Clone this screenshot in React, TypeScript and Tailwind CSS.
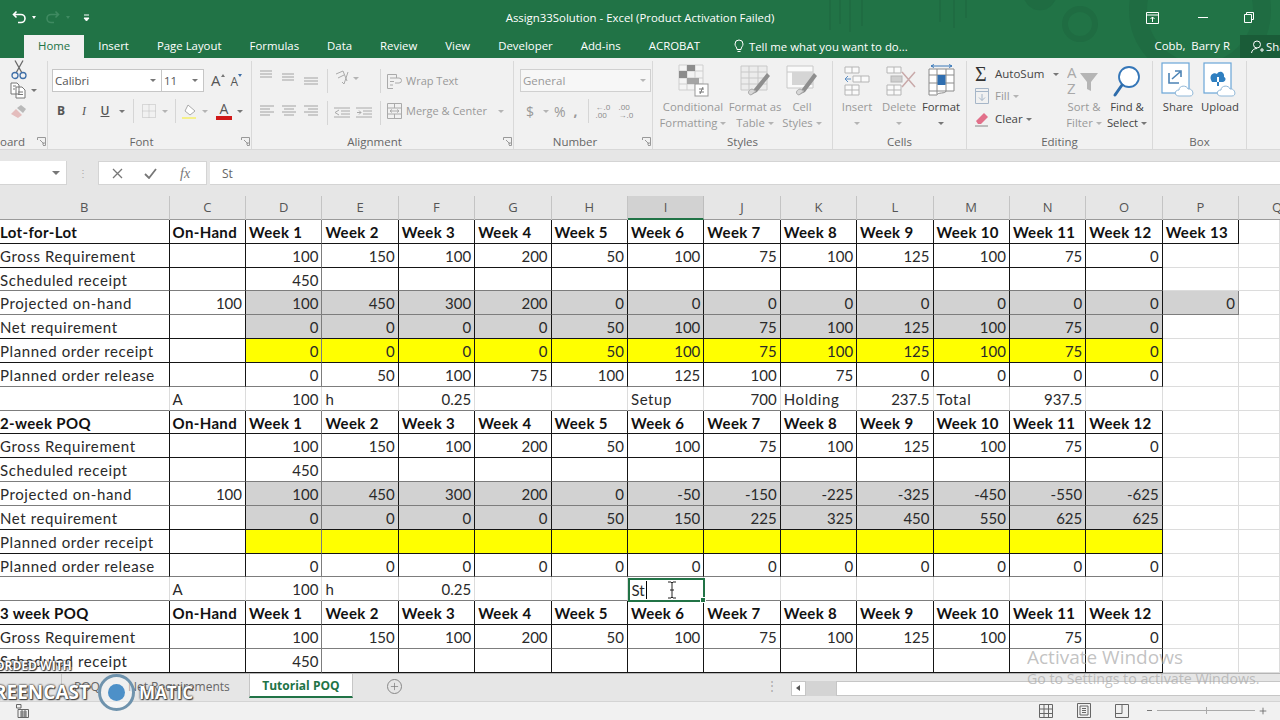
import { Plus } from "lucide-react"

const weeks = (n: number) => Array.from({ length: n }, (_, i) => `Week ${i + 1}`)
const zeros = Array(12).fill(0)
const gross = [100, 150, 100, 200, 50, 100, 75, 100, 125, 100, 75, 0]

type Row = {
  b?: string
  c?: string | number
  vals?: (string | number)[]
  kind: "head" | "data" | "note"
  fill?: "gray" | "yellow"
  soft?: boolean
}

const rows: Row[] = [
  { kind: "head", b: "Lot-for-Lot", c: "On-Hand", vals: weeks(13) },
  { kind: "data", b: "Gross Requirement", vals: gross },
  { kind: "data", b: "Scheduled receipt", vals: [450], soft: true },
  { kind: "data", b: "Projected on-hand", c: 100, fill: "gray", vals: [100, 450, 300, 200, 0, 0, 0, 0, 0, 0, 0, 0, 0], soft: true },
  { kind: "data", b: "Net requirement", fill: "gray", vals: [0, 0, 0, 0, 50, 100, 75, 100, 125, 100, 75, 0] },
  { kind: "data", b: "Planned order receipt", fill: "yellow", vals: [0, 0, 0, 0, 50, 100, 75, 100, 125, 100, 75, 0] },
  { kind: "data", b: "Planned order release", vals: [0, 50, 100, 75, 100, 125, 100, 75, 0, 0, 0, 0], soft: true },
  { kind: "note", c: "A", vals: [100, "h", 0.25, "", "", "Setup", 700, "Holding", 237.5, "Total", 937.5, ""], soft: true },
  { kind: "head", b: "2-week POQ", c: "On-Hand", vals: weeks(12) },
  { kind: "data", b: "Gross Requirement", vals: gross },
  { kind: "data", b: "Scheduled receipt", vals: [450], soft: true },
  { kind: "data", b: "Projected on-hand", c: 100, fill: "gray", vals: [100, 450, 300, 200, 0, -50, -150, -225, -325, -450, -550, -625], soft: true },
  { kind: "data", b: "Net requirement", fill: "gray", vals: [0, 0, 0, 0, 50, 150, 225, 325, 450, 550, 625, 625] },
  { kind: "data", b: "Planned order receipt", fill: "yellow", vals: [] },
  { kind: "data", b: "Planned order release", vals: zeros, soft: true },
  { kind: "note", c: "A", vals: [100, "h", 0.25, "", "", "", "", "", "", "", "", ""], soft: true },
  { kind: "head", b: "3 week POQ", c: "On-Hand", vals: weeks(12) },
  { kind: "data", b: "Gross Requirement", vals: gross, soft: true },
  { kind: "data", b: "Scheduled receipt", vals: [450] },
]

const columns = ["B", "C", "D", "E", "F", "G", "H", "I", "J", "K", "L", "M", "N", "O", "P", "Q"]

function Tiny({ className = "" }: { className?: string }) {
  return <span className={`inline-block w-0 h-0 border-x-[3px] border-x-transparent border-t-[3px] border-t-[#777] ${className}`} />
}

function Launcher() {
  return (
    <svg width="9" height="9" viewBox="0 0 9 9" className="absolute right-[1px] bottom-[3px]">
      <path d="M0.5 3V0.5H8.5V8.5H6M3 3L7 7M5 7H7V5" fill="none" stroke="#999" strokeWidth="1" />
    </svg>
  )
}

function Group({ label, width, launcher, left, children }: { label: string; width: number; launcher?: boolean; left?: boolean; children?: React.ReactNode }) {
  const place = left ? "text-left" : launcher ? "text-center pr-[16px]" : "text-center"
  return (
    <div style={{ width }} className="relative shrink-0 h-full flex flex-col border-r border-[#d9d9d9]">
      <div className="flex-1 min-h-0 relative">{children}</div>
      <div className={`h-[14px] text-[11.5px] leading-[14px] text-[#666] ${place}`}>{label}</div>
      {launcher && <Launcher />}
    </div>
  )
}

function AlignLines({ kind }: { kind: "l" | "c" | "r" | "t" | "m" | "b" }) {
  const paths = {
    l: "M1 3H15M1 6H11M1 9H15M1 12H11",
    c: "M1 3H15M3 6H13M1 9H15M3 12H13",
    r: "M1 3H15M5 6H15M1 9H15M5 12H15",
    t: "M1 2H13M1 5H13M1 8H13",
    m: "M1 5H13M1 8H13M1 11H13",
    b: "M1 9H15M1 12H15M1 15H15",
  }
  return (
    <svg width="16" height="16" viewBox="0 0 16 16">
      <path d={paths[kind]} stroke="#a3a3a3" strokeWidth="1" fill="none" />
    </svg>
  )
}

function Sep({ h = 24 }: { h?: number }) {
  return <div style={{ height: h }} className="w-px bg-[#d6d6d6] shrink-0" />
}

function BigTool({ width, label, sub, dim = true, noArrow, children }: { width: number; label: string; sub?: string; dim?: boolean; noArrow?: boolean; children: React.ReactNode }) {
  return (
    <div style={{ width }} className={`flex flex-col items-center text-[11.3px] leading-[16px] shrink-0 ${dim ? "text-[#999]" : "text-[#444]"}`}>
      <div className="h-[38px] flex items-center justify-center pt-[2px]">{children}</div>
      <div className="whitespace-nowrap">{label}</div>
      <div className="whitespace-nowrap flex items-center gap-[3px] h-[16px]">
        {sub}
        {!noArrow && <Tiny className={dim ? "opacity-50" : ""} />}
      </div>
    </div>
  )
}

function GridIcon({ children }: { children?: React.ReactNode }) {
  return (
    <svg width="36" height="34" viewBox="0 0 36 34">
      {children}
    </svg>
  )
}

function Cell({ row, index, value, fill, blackRight, softRight, blackBottom, softBottom }: {
  row: Row
  index: number
  value?: string | number
  fill?: "gray" | "yellow"
  blackRight: boolean
  softRight: boolean
  blackBottom: boolean
  softBottom: boolean
}) {
  const isNumber = typeof value === "number"
  const right = blackRight ? (softRight ? "border-r-[#7d7d7d]" : "border-r-[#151515]") : "border-r-[#dcdcdc]"
  const bottom = blackBottom ? (softBottom ? "border-b-[#7d7d7d]" : "border-b-[#151515]") : "border-b-[#dcdcdc]"
  const bg = fill === "gray" ? "bg-[#d2d2d2]" : fill === "yellow" ? "bg-[#ffff00]" : "bg-white"
  const weight = row.kind === "head" ? "font-bold text-[#111] tracking-[0.35px]" : isNumber ? "text-[#2a2a2a]" : "text-[#2a2a2a] tracking-[0.6px]"
  const align = isNumber ? "text-right pr-[3px]" : index === 0 ? "pl-0" : "pl-[3px]"
  return (
    <div className={`h-[23.83px] border-r border-b overflow-visible whitespace-nowrap text-[15px] leading-[24px] ${right} ${bottom} ${bg} ${weight} ${align}`}>
      {value}
    </div>
  )
}

function SheetRow({ row }: { row: Row }) {
  const all: (string | number | undefined)[] = [row.b, row.c, ...(row.vals ?? [])]
  return (
    <>
      {columns.map((col, i) => {
        const withinTable = i <= 13
        const extra = i === 14 && row.vals !== undefined && row.vals.length === 13
        const boxed = withinTable || extra
        const fill = (i >= 2 && i <= 13) || extra ? row.fill : undefined
        return (
          <Cell
            key={col}
            row={row}
            index={i}
            value={all[i]}
            fill={fill}
            blackRight={row.kind === "note" ? false : boxed}
            softRight={i === 2 || (extra && row.fill === "gray")}
            blackBottom={boxed}
            softBottom={!!row.soft}
          />
        )
      })}
    </>
  )
}

function BoxIcon({ kind }: { kind: "share" | "upload" }) {
  return (
    <svg width="36" height="38" viewBox="0 0 36 38">
      <rect x="2" y="1" width="27" height="30" fill="#fff" stroke="#6aa6d8" strokeWidth="1.2" />
      {kind === "share" ? (
        <path d="M9 11V21H19M12 17L20 10M15 9H21V15" fill="none" stroke="#4c83b5" strokeWidth="1.6" />
      ) : (
        <path d="M9 18C7 13 12 10 15 12C17 8 23 10 22 15C25 16 23 20 21 20H10ZM15 15V24H17V15" fill="#2f7fc0" />
      )}
      <path d="M19 34C14 34 14 28 19 28C19 23 27 23 28 27C33 26 35 34 30 34Z" fill="#fff" stroke="#8fb7d8" />
    </svg>
  )
}

export default function App() {
  const tabs = ["Insert", "Page Layout", "Formulas", "Data", "Review", "View", "Developer", "Add-ins", "ACROBAT"]

  return (
    <div className="w-[1280px] h-[720px] overflow-hidden relative flex flex-col bg-[#e6e6e6] font-['Open_Sans',sans-serif]">
      {/* title + tabs */}
      <div className="h-[58px] shrink-0 bg-[#217346] relative text-white">
        <svg width="460" height="58" viewBox="0 0 460 58" className="absolute right-0 top-0">
          <g fill="none" stroke="#1f6c42">
            <path d="M10 0V30M20 0V24M30 0V32M42 0V26M120 0V22M134 0V28M146 0V18" strokeWidth="2" />
            <circle cx="220" cy="-6" r="16" fill="#1f6c42" />
            <circle cx="260" cy="24" r="15" strokeWidth="6" />
            <circle cx="380" cy="10" r="62" strokeWidth="18" />
          </g>
        </svg>
        <div className="relative h-[35px] grid grid-cols-[1fr_auto_1fr] items-center">
          <div className="flex items-center pl-[12px]">
            <svg width="15" height="15" viewBox="0 0 15 15">
              <path d="M4.5 1.5L1.5 4.5L4.5 7.5M1.5 4.5H9a4 4 0 0 1 0 8H6" fill="none" stroke="#fff" strokeWidth="1.6" />
            </svg>
            <span className="ml-[5px] w-0 h-0 border-x-[2.5px] border-x-transparent border-t-[3px] border-t-white" />
            <svg width="15" height="15" viewBox="0 0 15 15" className="ml-[9px]">
              <path d="M10.5 1.5L13.5 4.5L10.5 7.5M13.5 4.5H6a4 4 0 0 0 0 8H9" fill="none" stroke="#3f8a61" strokeWidth="1.6" />
            </svg>
            <span className="ml-[6px] w-0 h-0 border-x-[2.5px] border-x-transparent border-t-[3px] border-t-[#3f8a61]" />
            <svg width="7" height="8" viewBox="0 0 7 8" className="ml-[13px]">
              <path d="M1 1H6M1 4L3.5 7L6 4Z" stroke="#fff" fill="#fff" strokeWidth="1" />
            </svg>
          </div>
          <div className="text-[11.4px] whitespace-nowrap">Assign33Solution - Excel (Product Activation Failed)</div>
          <div className="flex justify-end items-center text-white">
            <svg width="13" height="12" viewBox="0 0 13 12" className="mr-[39px]">
              <path d="M0.5 0.5H12.5V11.5H0.5ZM0.5 3H12.5M6.5 10V5M4.5 7L6.5 5L8.5 7" fill="none" stroke="#fff" />
            </svg>
            <div className="w-[10px] h-px bg-white mr-[36px]" />
            <svg width="10" height="11" viewBox="0 0 10 11" className="mr-[26px]">
              <path d="M2.5 2.5V0.5H9.5V7.5H7.5M0.5 2.5H7.5V10.5H0.5Z" fill="none" stroke="#fff" />
            </svg>
          </div>
        </div>
        <div className="relative h-[23px] flex items-stretch text-[11.4px] leading-[22px] pl-[24px]">
          <div className="px-[14px] bg-[#f1f1f1] text-[#217346]">Home</div>
          {tabs.map((t) => (
            <div key={t} className="px-[14px] whitespace-nowrap">{t}</div>
          ))}
          <div className="ml-[20px] flex items-center gap-[5px] whitespace-nowrap">
            <svg width="10" height="15" viewBox="0 0 10 15">
              <path d="M3 10.5C3 8 1 7.5 1 5a4 4 0 0 1 8 0C9 7.5 7 8 7 10.5ZM3.5 12.5H6.5" fill="none" stroke="#fff" />
            </svg>
            Tell me what you want to do...
          </div>
          <div className="ml-auto whitespace-nowrap mr-[10px]">Cobb,&nbsp; Barry R</div>
          <div className="w-[40px] bg-[#1a5c38] flex items-center pl-[11px] gap-[2px] overflow-hidden">
            <svg width="13" height="14" viewBox="0 0 13 14" className="shrink-0">
              <circle cx="6" cy="4.5" r="3.5" fill="none" stroke="#fff" />
              <path d="M0.5 13C1 10 3 8.5 6 8.5M9 10H13M11 8V12" fill="none" stroke="#fff" />
            </svg>
            <span>Share</span>
          </div>
        </div>
      </div>

      {/* ribbon */}
      <div className="h-[92px] shrink-0 bg-[#f1f1f1] border-b border-[#d8d8d8] flex pt-[3px] text-[#555]">
        <Group label="oard" width={48} launcher left>
          <div className="flex flex-col items-start pl-[10px] -mt-[1px]">
            <svg width="18" height="20" viewBox="0 0 18 20">
              <path d="M5 0.5L12 13M13 0.5L6 13" fill="none" stroke="#6a6a6a" strokeWidth="1.3" />
              <circle cx="5" cy="15.5" r="3" fill="none" stroke="#3f6fa8" strokeWidth="1.3" />
              <circle cx="13" cy="15.5" r="3" fill="none" stroke="#3f6fa8" strokeWidth="1.3" />
            </svg>
            <div className="flex items-center mt-[2px]">
              <svg width="16" height="17" viewBox="0 0 16 17">
                <path d="M1 1H7L9 3V12H1ZM6 5H12L15 8V16H6ZM3 4H6M3 7H5M8 10H13M8 12.5H13" fill="#fff" stroke="#777" />
              </svg>
              <Tiny className="ml-[5px]" />
            </div>
            <svg width="17" height="15" viewBox="0 0 17 15" className="mt-[5px]">
              <path d="M1 10L6 5L12 11L8 14Z" fill="#e4bdbd" />
              <path d="M7 4L11 1L16 5L13 9Z" fill="#b9b9b9" />
            </svg>
          </div>
        </Group>

        <Group label="Font" width={204} launcher>
          <div className="pl-[4px] pt-[8px]">
            <div className="flex items-center">
              <div className="w-[110px] h-[23px] bg-white border border-[#c6c6c6] flex items-center justify-between pl-[2px] pr-[5px] text-[11.5px]">
                Calibri <Tiny />
              </div>
              <div className="w-[42px] h-[23px] bg-white border border-l-0 border-[#c6c6c6] flex items-center justify-between pl-[2px] pr-[5px] text-[11.5px]">
                11 <Tiny />
              </div>
              <span className="ml-[7px] text-[15px] leading-none text-[#555]">A</span>
              <span className="mb-[10px] w-0 h-0 border-x-[2px] border-x-transparent border-b-[3px] border-b-[#777]" />
              <span className="ml-[6px] text-[12px] leading-none mt-[2px] text-[#555]">A</span>
              <span className="mb-[10px] w-0 h-0 border-x-[2.5px] border-x-transparent border-t-[3px] border-t-[#3f6fa8]" />
            </div>
            <div className="flex items-center h-[24px] mt-[7px] text-[#555]">
              <span className="w-[18px] text-center text-[12px] font-bold">B</span>
              <span className="ml-[3px] w-[22px] text-center text-[12px] italic font-['Liberation_Serif',serif]">I</span>
              <span className="w-[20px] text-center text-[12px] underline font-semibold">U</span>
              <Tiny className="ml-[4px]" />
              <div className="ml-[8px]"><Sep /></div>
              <svg width="16" height="16" viewBox="0 0 16 16" className="ml-[7px]">
                <path d="M1.5 1.5H14.5V14.5H1.5ZM8 1.5V14.5M1.5 8H14.5" fill="none" stroke="#bdbdbd" strokeDasharray="1 1" />
              </svg>
              <Tiny className="ml-[5px] opacity-50" />
              <div className="ml-[7px]"><Sep /></div>
              <svg width="17" height="17" viewBox="0 0 17 17" className="ml-[6px]">
                <path d="M6 2L13 8L8 12L3 8Z" fill="#fff" stroke="#aaa" />
                <rect x="0" y="14" width="14" height="2" fill="#f5f08a" />
              </svg>
              <Tiny className="ml-[3px] opacity-50" />
              <div className="ml-[8px] flex flex-col items-center w-[16px] leading-none">
                <span className="text-[14px] leading-[14px] text-[#555]">A</span>
                <span className="w-[16px] h-[4px] bg-[#d01818]" />
              </div>
              <Tiny className="ml-[5px]" />
            </div>
          </div>
        </Group>

        <Group label="Alignment" width={262} launcher>
          <div className="flex pl-[7px] pt-[8px] h-full">
            <div className="grid grid-cols-[22px_22px_22px] h-[60px] content-start gap-y-[10px]">
              <AlignLines kind="t" />
              <AlignLines kind="m" />
              <AlignLines kind="b" />
              <div className="mt-[8px]"><AlignLines kind="l" /></div>
              <div className="mt-[8px]"><AlignLines kind="c" /></div>
              <div className="mt-[8px]"><AlignLines kind="r" /></div>
            </div>
            <div className="flex flex-col gap-[8px] ml-[2px]">
              <Sep />
              <Sep />
            </div>
            <div className="w-[46px] pl-[6px] flex flex-col gap-[16px]">
              <div className="flex items-center h-[16px] mt-[1px]">
                <svg width="16" height="16" viewBox="0 0 16 16">
                  <path d="M2 4L9 1L13 11M4 8L10 5M14 2L10 14L8 12" fill="none" stroke="#aaa" />
                </svg>
                <Tiny className="ml-[3px] opacity-50" />
              </div>
              <div className="flex items-center h-[16px] mt-[3px]">
                <svg width="16" height="14" viewBox="0 0 16 14">
                  <path d="M0 2H16M7 5H16M7 8H16M0 11H16M5 4L1 6.5L5 9" stroke="#aaa" fill="none" />
                </svg>
                <svg width="16" height="14" viewBox="0 0 16 14" className="ml-[6px]">
                  <path d="M0 2H16M7 5H16M7 8H16M0 11H16M1 6.5H5M3 4.5L5 6.5L3 8.5" stroke="#aaa" fill="none" />
                </svg>
              </div>
            </div>
            <div className="flex flex-col gap-[8px] ml-[6px]">
              <Sep />
              <Sep />
            </div>
            <div className="pl-[6px] text-[11px] leading-[16px] text-[#999] whitespace-nowrap">
              <div className="flex items-center gap-[4px] h-[16px] mt-[4px]">
                <svg width="15" height="15" viewBox="0 0 15 15">
                  <path d="M0.5 0.5H9.5V4M0.5 0.5V14.5H6M3 4H12A2.5 2.5 0 0 1 12 9H8M3 7.5H7M3 11H6" fill="none" stroke="#aaa" />
                </svg>
                Wrap Text
              </div>
              <div className="flex items-center gap-[4px] h-[16px] mt-[14px]">
                <svg width="15" height="16" viewBox="0 0 15 16">
                  <path d="M0.5 0.5H14.5V15.5H0.5ZM0.5 5H14.5M0.5 11H14.5M7.5 0.5V5M7.5 11V15.5M3 8H12M5 6.5L3 8L5 9.5M10 6.5L12 8L10 9.5" fill="none" stroke="#aaa" />
                </svg>
                Merge &amp; Center
                <Tiny className="ml-[7px] opacity-50" />
              </div>
            </div>
          </div>
        </Group>

        <Group label="Number" width={139} launcher>
          <div className="pl-[6px] pt-[8px]">
            <div className="w-[131px] h-[23px] bg-[#f7f7f7] border border-[#d0d0d0] flex items-center justify-between pl-[2px] pr-[4px] text-[11.5px] text-[#999]">
              General <Tiny className="opacity-50" />
            </div>
            <div className="flex items-center h-[24px] mt-[7px] text-[#999]">
              <span className="ml-[1px] w-[18px] text-center text-[14px]">$</span>
              <Tiny className="ml-[4px] opacity-50" />
              <span className="ml-[5px] text-[14px]">%</span>
              <span className="ml-[8px] text-[14px] font-bold leading-none">,</span>
              <div className="ml-[10px]"><Sep /></div>
              <div className="ml-[7px] text-[8px] leading-[8px] w-[21px] text-[#8a8a8a] whitespace-nowrap">
                &larr;.0<br />.00
              </div>
              <div className="ml-[2px] text-[8px] leading-[8px] w-[18px] text-[#8a8a8a] whitespace-nowrap">
                .00<br />&rarr;.0
              </div>
            </div>
          </div>
        </Group>

        <Group label="Styles" width={180}>
          <div className="flex pl-[6px]">
            <BigTool width={68} label="Conditional" sub="Formatting">
              <GridIcon>
                <path d="M4 1H28V26H4ZM4 7H28M4 14H28M4 20H28M12 1V26M20 1V26" fill="#f4f4f4" stroke="#cfcfcf" />
                <path d="M12 1H20V7H12ZM4 7H12V14H4Z" fill="#8c8c8c" />
                <path d="M12 14H24V20H12Z" fill="#a5a5a5" />
                <rect x="20" y="20" width="13" height="12" fill="#fff" stroke="#999" />
                <path d="M24 25H29M24 28H29M28 23L25 30" stroke="#777" fill="none" />
              </GridIcon>
            </BigTool>
            <BigTool width={56} label="Format as" sub="Table">
              <GridIcon>
                <path d="M4 2H30V26H4ZM4 8H30M4 14H30M4 20H30M12 2V26M21 2V26" fill="#ececec" stroke="#c8c8c8" />
                <path d="M33 12L20 28L14 31L17 25L30 9Z" fill="#8e8e8e" />
                <path d="M14 31C10 30 11 26 15 25L19 27Z" fill="#d7d7d7" stroke="#aaa" />
              </GridIcon>
            </BigTool>
            <BigTool width={38} label="Cell" sub="Styles">
              <GridIcon>
                <path d="M3 2H29V24H3ZM3 8H29" fill="#fafafa" stroke="#c8c8c8" />
                <rect x="8" y="8" width="21" height="13" fill="#d5d5d5" />
                <path d="M33 12L21 28L15 31L18 25L30 9Z" fill="#8e8e8e" />
                <path d="M15 31C11 30 12 26 16 25L20 27Z" fill="#d7d7d7" stroke="#aaa" />
              </GridIcon>
            </BigTool>
          </div>
        </Group>

        <Group label="Cells" width={134}>
          <div className="flex pl-[3px]">
            <BigTool width={42} label="Insert">
              <GridIcon>
                <path d="M6 3H20V9H6ZM6 21H20V31H6ZM13 3V9M13 21V31M6 26H20M14 12H30V18H14ZM22 12V18" fill="#fafafa" stroke="#b5b5b5" />
                <path d="M6 15H12M9 12L6 15L9 18" stroke="#5c8ec4" fill="none" />
              </GridIcon>
            </BigTool>
            <BigTool width={42} label="Delete">
              <GridIcon>
                <path d="M6 3H20V9H6ZM6 21H20V31H6ZM13 3V9M13 21V31M6 26H20" fill="#fafafa" stroke="#b5b5b5" />
                <rect x="10" y="12" width="11" height="6" fill="#cfcfcf" stroke="#b5b5b5" />
                <path d="M21 8L34 23M34 8L21 23" stroke="#c9a9a9" strokeWidth="1.5" />
              </GridIcon>
            </BigTool>
            <BigTool width={42} label="Format" dim={false}>
              <GridIcon>
                <path d="M6 5H31V27H6ZM6 11H31M6 19H31M14 5V30M23 5V27M6 27V31H14C14 28 23 30 23 27" fill="#fff" stroke="#8b8b8b" />
                <rect x="14.5" y="11" width="8" height="10" fill="#2f6eb0" />
                <path d="M8 2H29M8 2L11 0.5M8 2L11 3.5M29 2L26 0.5M29 2L26 3.5" stroke="#3a78b8" fill="none" />
              </GridIcon>
            </BigTool>
          </div>
        </Group>

        <Group label="Editing" width={186}>
          <div className="flex text-[11.5px] leading-[16px]">
            <div className="w-[96px] pl-[8px] pt-[5px] shrink-0">
              <div className="flex items-center h-[16px]">
                <span className="w-[16px] text-[20px] leading-[16px] text-[#333] font-['Liberation_Serif',serif]">&Sigma;</span>
                <span className="ml-[4px] text-[#444]">AutoSum</span>
                <Tiny className="ml-[9px]" />
              </div>
              <div className="flex items-center h-[16px] mt-[6px] text-[#999]">
                <svg width="14" height="16" viewBox="0 0 14 16">
                  <path d="M0.5 0.5H13.5V15.5H0.5ZM0.5 3.5H13.5M7 6V12.5M4 9.5L7 12.5L10 9.5" fill="none" stroke="#a6b6c8" />
                </svg>
                <span className="ml-[6px]">Fill</span>
                <Tiny className="ml-[3px] opacity-50" />
              </div>
              <div className="flex items-center h-[16px] mt-[7px] text-[#444]">
                <svg width="14" height="16" viewBox="0 0 14 16">
                  <path d="M1 10L9 2L13 6L6 13H3Z" fill="#e2708a" />
                  <path d="M0 15H13" stroke="#888" />
                </svg>
                <span className="ml-[6px]">Clear</span>
                <Tiny className="ml-[3px]" />
              </div>
            </div>
            <BigTool width={42} label="Sort &" sub="Filter">
              <svg width="34" height="34" viewBox="0 0 34 34">
                <text x="0" y="14" fontSize="15" fill="#a9a9a9">A</text>
                <text x="0" y="30" fontSize="15" fill="#a9a9a9">Z</text>
                <path d="M13 9H31L24 18V27L20 25V18Z" fill="#b5b5b5" />
              </svg>
            </BigTool>
            <BigTool width={44} label="Find &" sub="Select" dim={false}>
              <svg width="30" height="34" viewBox="0 0 30 34">
                <circle cx="17" cy="13" r="10" fill="#fff" stroke="#3476b8" strokeWidth="1.8" />
                <path d="M10 21L3 31" stroke="#2d6cab" strokeWidth="3" strokeLinecap="round" />
              </svg>
            </BigTool>
          </div>
        </Group>

        <Group label="Box" width={94}>
          <div className="flex pl-[4px]">
            <BigTool width={42} label="Share" dim={false} noArrow>
              <BoxIcon kind="share" />
            </BigTool>
            <BigTool width={42} label="Upload" dim={false} noArrow>
              <BoxIcon kind="upload" />
            </BigTool>
          </div>
        </Group>
      </div>

      {/* formula bar */}
      <div className="h-[46px] shrink-0 flex items-center text-[#666] bg-[#e6e6e6]">
        <div className="w-[67px] h-[24px] bg-white border-r border-b border-[#d4d4d4] flex items-center justify-end pr-[6px]">
          <Tiny className="border-x-[4px] border-t-[4px]" />
        </div>
        <div className="w-[31px] flex justify-center text-[#aaa] text-[10px] leading-[5px] tracking-tight">⋮</div>
        <div className="w-[109px] h-[24px] bg-white border border-[#d4d4d4] flex items-center text-[#777]">
          <span className="ml-[13px] flex">
            <svg width="11" height="11" viewBox="0 0 11 11"><path d="M1 1L10 10M10 1L1 10" stroke="#777" strokeWidth="1.3" /></svg>
          </span>
          <span className="ml-[21px] flex">
            <svg width="13" height="11" viewBox="0 0 13 11"><path d="M1 6L5 10L12 1" fill="none" stroke="#777" strokeWidth="1.8" /></svg>
          </span>
          <span className="ml-[23px] italic font-['Liberation_Serif',serif] text-[14px]">fx</span>
        </div>
        <div className="ml-[3px] flex-1 h-[24px] bg-white border-y border-[#d4d4d4] pl-[12px] text-[12px] leading-[23px]">St</div>
      </div>

      {/* column letters */}
      <div className="h-[24px] shrink-0 grid grid-cols-[169.6px_repeat(14,76.4px)_1fr] bg-[#e6e6e6] border-b border-[#9a9a9a] text-[13px] text-[#555] leading-[23px] text-center">
        {columns.map((c) => (
          <div key={c} className={c === "I" ? "bg-[#d2d2d2] border-r border-[#bdbdbd] border-b-2 border-b-[#217346] h-[24px]" : c === "Q" ? "text-left pl-[33px]" : "border-r border-[#c4c4c4]"}>
            {c}
          </div>
        ))}
      </div>

      {/* sheet */}
      <div className="relative grid grid-cols-[169.6px_repeat(14,76.4px)_1fr] bg-white font-['Lato',sans-serif]">
        {rows.map((row, i) => (
          <SheetRow key={i} row={row} />
        ))}
        {/* active cell I, editing */}
        <div className="absolute left-[627.5px] top-[357.5px] w-[77px] h-[24px] border-2 border-[#217346] bg-white text-[15px] leading-[21px] pl-[2px] text-[#2a2a2a]">
          <span className="border-r border-black pr-px">St</span>
          <span className="absolute right-[-3px] bottom-[-3px] w-[6px] h-[6px] bg-[#217346] border border-white" />
        </div>
      </div>

      {/* sheet tabs */}
      <div className="h-[28px] shrink-0 bg-[#e6e6e6] border-t border-[#b5b5b5] flex items-start text-[12px] text-[#666]">
        <div className="w-[62px] h-[24px] border-r border-[#c6c6c6]" />
        <div className="ml-[12px] leading-[26px]">POQ</div>
        <div className="pl-[28px] w-[149px] leading-[26px] whitespace-nowrap">Net Requirements</div>
        <div className="w-[104px] h-[24px] bg-white border-x border-[#c6c6c6] border-b-2 border-b-[#217346] text-center leading-[24px] font-bold text-[#217346]">
          Tutorial POQ
        </div>
        <div className="ml-[34px] mt-[5px] w-[15px] h-[15px] rounded-full border border-[#888] flex items-center justify-center">
          <Plus size={11} strokeWidth={1.5} color="#777" />
        </div>
        <div className="ml-[364px] mt-[6px] text-[#aaa] leading-[12px]">⋮</div>
        <div className="ml-[13px] mt-[7px] w-[15px] h-[15px] bg-white border border-[#c6c6c6] flex items-center justify-center">
          <span className="w-0 h-0 border-y-[3.5px] border-y-transparent border-r-[4px] border-r-[#555]" />
        </div>
        <div className="mt-[7px] w-[30px] h-[15px] bg-[#d4d4d4]" />
        <div className="mt-[7px] flex-1 h-[15px] bg-white border border-[#c6c6c6] border-r-0" />
      </div>

      {/* status bar */}
      <div className="flex-1 bg-[#f1f1f1] border-t border-[#d4d4d4] flex items-center pl-[16px]">
        <svg width="13" height="14" viewBox="0 0 13 14">
          <path d="M0.5 0.5H5V4H0.5ZM2 5.5H12.5V13.5H2ZM4 8H11M4 10H11M4 12H11M6 6V13M9 6V13" fill="none" stroke="#666" />
        </svg>
        <div className="ml-auto flex items-center mr-[12px]">
          <svg width="14" height="14" viewBox="0 0 14 14">
            <path d="M0.5 0.5H13.5V13.5H0.5ZM0.5 5H13.5M0.5 9.5H13.5M5 0.5V13.5M9.5 0.5V13.5" fill="none" stroke="#666" />
          </svg>
          <svg width="14" height="15" viewBox="0 0 14 15" className="ml-[24px]">
            <path d="M0.5 0.5H13.5V14.5H0.5ZM3 3H11V12H3ZM5 5.5H9M5 7.5H9M5 9.5H9" fill="none" stroke="#666" />
          </svg>
          <svg width="14" height="14" viewBox="0 0 14 14" className="ml-[24px]">
            <path d="M0.5 0.5H13.5V13.5H0.5ZM0.5 9.5H7V0.5" fill="none" stroke="#666" />
          </svg>
          <span className="ml-[18px] w-[5px] h-px bg-[#777]" />
          <div className="relative ml-[5px] w-[98px] h-px bg-[#aaa]">
            <span className="absolute left-[49px] -top-[3px] w-px h-[7px] bg-[#aaa]" />
          </div>
          <Plus size={10} color="#666" className="ml-[3px]" />
        </div>
      </div>

      {/* screen recorder watermark */}
      <div className="absolute left-0 top-[657px] h-[50px] w-[200px] text-white font-bold [text-shadow:0_0_2px_#333,0_0_2px_#333,1px_1px_1px_#444]">
        <div className="text-[12px] leading-[18px] whitespace-nowrap -ml-[5px]">ORDED WITH</div>
        <div className="flex items-center -ml-[6px] -mt-[1px] whitespace-nowrap">
          <span className="text-[19px] w-[104px]">REENCAST</span>
          <span className="w-[37px] h-[37px] rounded-full border-[3px] border-[#6f93ad] bg-white/40 flex items-center justify-center shrink-0">
            <span className="w-[17px] h-[17px] rounded-full bg-[#4d90c8]" />
          </span>
          <span className="ml-[4px] text-[17px]">MATIC</span>
        </div>
      </div>

      {/* windows watermark and pointer */}
      <div className="absolute left-[1027px] top-[645px] text-[#a8a8a8]/70 pointer-events-none whitespace-nowrap">
        <div className="text-[19px] leading-[24px]">Activate Windows</div>
        <div className="text-[14.2px] leading-[20px]">Go to Settings to activate Windows.</div>
      </div>
      <svg width="10" height="18" viewBox="0 0 10 18" className="absolute left-[667px] top-[581px]">
        <path d="M1 1H4L5 2L6 1H9M5 2V16M1 17H4L5 16L6 17H9M3 9H7" fill="none" stroke="#222" />
      </svg>
    </div>
  )
}
